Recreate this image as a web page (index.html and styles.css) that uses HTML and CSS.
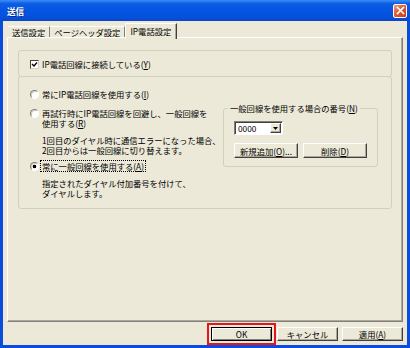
FILE: index.html
```html
<!DOCTYPE html>
<html>

<head>
  <meta charset="utf-8">
  <title>送信</title>
  <link rel="stylesheet" href="styles.css">
</head>

<body>
  <div class="window">
    <div class="titlebar">
      <span class="title">送信</span>
      <span class="close">
        <svg width="11" height="11" viewBox="0 0 11 11">
          <path d="M2.5 2.5 L8.5 8.5 M8.5 2.5 L2.5 8.5" stroke="#fff" stroke-width="1.6" stroke-linecap="square" />
        </svg>
      </span>
    </div>

    <div class="frame">
      <div class="tabs">
        <span class="tab">送信設定</span>
        <span class="tab">ページヘッダ設定</span>
        <span class="tab active">IP電話設定</span>
      </div>

      <div class="panel">
        <div class="group top-group">
          <div class="option">
            <span class="check">
              <svg width="7" height="7" viewBox="0 0 7 7">
                <path d="M1 3 L3 5 L6 1.5" stroke="#000" stroke-width="1.3" fill="none" />
              </svg>
            </span>
            <span>IP電話回線に接続している(<u>Y</u>)</span>
          </div>
        </div>

        <div class="group main-group">
          <div class="choices">
            <div class="option">
              <span class="radio"></span>
              <span>常にIP電話回線を使用する(<u>I</u>)</span>
            </div>

            <div class="option retry">
              <span class="radio"></span>
              <span class="lines">再試行時にIP電話回線を回避し、一般回線を<br>使用する(<u>R</u>)</span>
            </div>
            <div class="note">1回目のダイヤル時に通信エラーになった場合、<br>2回目からは一般回線に切り替えます。</div>

            <div class="option always">
              <span class="radio on"></span>
              <span class="focus">常に一般回線を使用する(<u>A</u>)</span>
            </div>
            <div class="note desc">指定されたダイヤル付加番号を付けて、<br>ダイヤルします。</div>
          </div>

          <fieldset class="number-box">
            <legend>一般回線を使用する場合の番号(<u>N</u>)</legend>
            <div class="number-body">
              <div class="combo">
                <span class="combo-text">0000</span>
                <span class="combo-btn">
                  <svg width="5" height="3" viewBox="0 0 5 3">
                    <path d="M0 0 H5 L2.5 3 Z" fill="#000" />
                  </svg>
                </span>
              </div>
              <div class="box-buttons">
                <button class="btn wide">新規追加(<u>O</u>)...</button>
                <button class="btn wide">削除(<u>D</u>)</button>
              </div>
            </div>
          </fieldset>
        </div>
      </div>

      <div class="actions">
        <span class="ok-mark"><button class="btn default">OK</button></span>
        <button class="btn cancel">キャンセル</button>
        <button class="btn apply">適用(<u>A</u>)</button>
      </div>
    </div>
  </div>
</body>

</html>
```

FILE: styles.css
```css
* {
  box-sizing: border-box;
}

body {
  margin: 0;
  font-family: "Noto Sans CJK JP", sans-serif;
  font-size: 8.3px;
  line-height: 10px;
  color: #000;
  background: #fff;
}

u {
  text-decoration-thickness: 1px;
  text-underline-offset: 1px;
}

.window {
  width: 410px;
  height: 348px;
  display: flex;
  flex-direction: column;
}

/* title bar */
.titlebar {
  height: 21px;
  flex: none;
  display: flex;
  align-items: center;
  justify-content: space-between;
  padding: 0 3px 0 7px;
  background: linear-gradient(to bottom, #3d8ef6 0%, #0b5ce4 18%, #0554e2 55%, #0650da 85%, #0a46c8 100%);
}

.title {
  color: #fff;
  font-weight: bold;
  font-size: 8.6px;
  text-shadow: 1px 1px 0 #0b2a8a;
}

.close {
  width: 14px;
  height: 14px;
  display: flex;
  align-items: center;
  justify-content: center;
  border: 1px solid #fff;
  border-radius: 2px;
  background: linear-gradient(135deg, #f0a080 0%, #e0603a 40%, #c83c16 100%);
}

/* window body */
.frame {
  flex: 1;
  display: flex;
  flex-direction: column;
  background: #ece9d8;
  border: 3px solid #0a4cdc;
  border-top: 0;
  padding: 2px 4px 0;
}

.tabs {
  height: 15px;
  flex: none;
  display: flex;
  align-items: flex-end;
  padding-left: 1px;
}

.tab {
  height: 12px;
  padding: 0 4px 0 4px;
  line-height: 11px;
  white-space: nowrap;
  border-top: 1px solid #fff;
  border-right: 1px solid #808080;
}

.tab.active {
  position: relative;
  z-index: 1;
  height: 16px;
  margin-bottom: -1px;
  padding: 2px 5px 0 4px;
  background: #ece9d8;
  border-left: 1px solid #fff;
  border-right: 1px solid #404040;
  box-shadow: inset -1px 0 0 #aca899;
}

.panel {
  height: 285px;
  flex: none;
  margin-top: -1px;
  padding: 12px 10px 0;
  border: 1px solid;
  border-color: #fff #808080 #808080 #fff;
  box-shadow: inset -1px -1px 0 #aca899;
}

.group {
  border: 1px solid #d0d0bf;
  border-radius: 3px;
}

.top-group {
  height: 27px;
  display: flex;
  align-items: center;
  padding-left: 11px;
}

.main-group {
  height: 133px;
  margin-top: -1px;
  display: flex;
  padding: 12px 13px 0 11px;
}

.choices {
  width: 193px;
  flex: none;
}

.option {
  display: flex;
  align-items: flex-start;
  gap: 3px;
  white-space: nowrap;
}

.check,
.radio {
  width: 9px;
  height: 9px;
  flex: none;
  margin-top: 1px;
  background: #fff;
}

.check {
  display: flex;
  align-items: center;
  justify-content: center;
  border: 1px solid;
  border-color: #404040 #d4d0c8 #d4d0c8 #404040;
}

.radio {
  border-radius: 50%;
  border: 1px solid;
  border-color: #808080 #fff #fff #808080;
  box-shadow: inset 1px 1px 0 #d4d0c8;
}

.radio.on {
  background: radial-gradient(circle, #000 0 1.6px, #fff 2.1px);
}

.retry {
  margin-top: 9px;
}

.note {
  margin-top: 7px;
  padding-left: 12px;
  white-space: nowrap;
}

.always {
  margin-top: 6px;
}

.focus {
  outline: 1px dotted #000;
  padding: 0 1px;
  margin-left: -1px;
}

.desc {
  margin-top: 7px;
}

/* number group */
.number-box {
  width: 155px;
  margin: 14px 0 0;
  padding: 0 4px 8px;
  min-width: 0;
  align-self: flex-start;
  border: 1px solid #d0d0bf;
  border-radius: 3px;
}

.number-box legend {
  padding: 0 2px;
  line-height: 10px;
  white-space: nowrap;
}

.number-body {
  padding: 8px 0 0 6px;
}

.combo {
  width: 49px;
  height: 14px;
  display: flex;
  align-items: center;
  justify-content: space-between;
  background: #fff;
  border: 1px solid;
  border-color: #808080 #fff #fff #808080;
  box-shadow: inset 1px 1px 0 #404040;
  padding: 1px 1px 1px 3px;
}

.combo-text {
  line-height: 10px;
}

.combo-btn {
  width: 11px;
  height: 10px;
  display: flex;
  align-items: center;
  justify-content: center;
  background: #ece9d8;
  border: 1px solid;
  border-color: #fff #404040 #404040 #fff;
  box-shadow: inset -1px -1px 0 #aca899;
}

.box-buttons {
  display: flex;
  gap: 5px;
  margin-top: 8px;
}

.btn {
  height: 15px;
  padding: 0;
  font-family: inherit;
  font-size: 8.3px;
  line-height: 10px;
  color: #000;
  background: #ece9d8;
  border: 1px solid;
  border-color: #fff #404040 #404040 #fff;
  box-shadow: inset -1px -1px 0 #aca899;
}

.btn.wide {
  width: 64px;
}

/* dialog buttons */
.actions {
  height: 22px;
  flex: none;
  margin-top: 1px;
  display: flex;
  align-items: center;
  justify-content: flex-end;
}

.actions .btn {
  width: 61px;
  height: 14px;
}

.ok-mark {
  display: flex;
  padding: 2px;
  border: 2px solid #e8141c;
}

.btn.default {
  border-color: #000;
  box-shadow: inset 1px 1px 0 #fff, inset -1px -1px 0 #808080;
}

.cancel {
  margin-left: 1px;
}

.apply {
  margin-left: 4px;
}
```
